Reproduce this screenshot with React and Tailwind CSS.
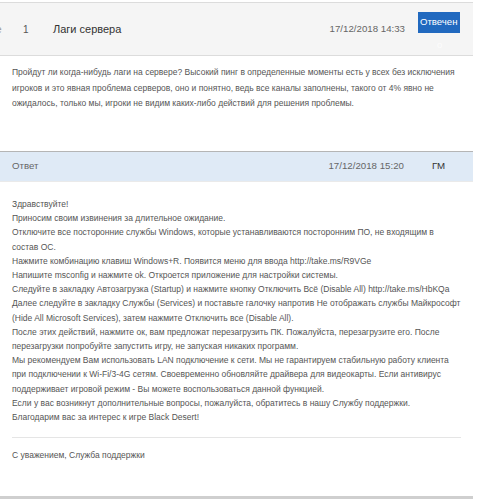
export default function App() {
  const body = [
    "Здравствуйте!",
    "Приносим своим извинения за длительное ожидание.",
    "Отключите все посторонние службы Windows, которые устанавливаются посторонним ПО, не входящим в состав ОС.",
    "Нажмите комбинацию клавиш Windows+R. Появится меню для ввода http://take.ms/R9VGe",
    "Напишите msconfig и нажмите ok. Откроется приложение для настройки системы.",
    "Следуйте в закладку Автозагрузка (Startup) и нажмите кнопку Отключить Всё (Disable All) http://take.ms/HbKQa",
    "Далее следуйте в закладку Службы (Services) и поставьте галочку напротив Не отображать службы Майкрософт (Hide All Microsoft Services), затем нажмите Отключить все (Disable All).",
    "После этих действий, нажмите ок, вам предложат перезагрузить ПК. Пожалуйста, перезагрузите его. После перезагрузки попробуйте запустить игру, не запуская никаких программ.",
    "Мы рекомендуем Вам использовать LAN подключение к сети. Мы не гарантируем стабильную работу клиента при подключении к Wi-Fi/3-4G сетям. Своевременно обновляйте драйвера для видеокарты. Если антивирус поддерживает игровой режим - Вы можете воспользоваться данной функцией.",
    "Если у вас возникнут дополнительные вопросы, пожалуйста, обратитесь в нашу Службу поддержки.",
    "Благодарим вас за интерес к игре Black Desert!",
  ];
  return (
    <div
      className="w-[480px] h-[502px] bg-white overflow-hidden"
      style={{ fontFamily: "Arial, 'Liberation Sans', sans-serif" }}
    >
      <div className="w-[473px]">
        {/* top row */}
        <div className="mt-[2px] h-[54px] bg-[#f5f5f5] border-y border-[#dcdcdc] flex items-center relative">
          <span className="ml-[-4px] text-[10px] text-[#999] w-[27px]">е</span>
          <span className="text-[10px] text-[#555] w-[30px]">1</span>
          <span className="text-[11px] text-[#333]">Лаги сервера</span>
          <span className="ml-auto mr-[13px] text-[9.7px] text-[#666]">17/12/2018 14:33</span>
          <div className="mr-[13px] w-[42px] h-[21px] bg-[#2169bf] self-start mt-[9px] relative">
            <span className="absolute left-[2px] top-[3px] text-[9.6px] leading-[13px] text-white whitespace-nowrap">Отвечен</span>
            <span className="absolute left-[19px] top-[26px] text-[9.6px] leading-[13px] text-white opacity-80">о</span>
          </div>
        </div>
        {/* question text */}
        <div className="h-[95px] pl-[12px] pr-[8px] pt-[9px] text-[8.5px] leading-[15.5px] text-[#555]">
          <p>
            Пройдут ли когда-нибудь лаги на сервере? Высокий пинг в определенные моменты есть у всех без исключения игроков и это явная проблема серверов, оно и понятно, ведь все каналы заполнены, такого от 4% явно не ожидалось, только мы, игроки не видим каких-либо действий для решения проблемы.
          </p>
        </div>
        {/* answer header */}
        <div className="h-[31px] bg-[#dfeaf6] border-t border-[#b5b5b5] border-b border-b-[#eaeaea] flex items-center px-[12px] text-[9.7px] text-[#666]">
          <span>Ответ</span>
          <span className="ml-auto">17/12/2018 15:20</span>
          <span className="ml-[28px] mr-[16px] text-[#333]">ГМ</span>
        </div>
        {/* answer body */}
        <div className="pl-[12px] pr-[12px] pt-[15px] text-[8.5px] leading-[14.2px] text-[#555]">
          {body.map((l, i) => (
            <p key={i}>{l}</p>
          ))}
        </div>
        <div className="mx-[12px] mt-[13px] border-t border-[#e5e5e5]" />
        <div className="px-[12px] pt-[10px] h-[58px] text-[8.5px] leading-[14px] text-[#555]">
          С уважением, Служба поддержки
        </div>
        <div className="h-[3px] bg-[#cfcfcf]" />
      </div>
    </div>
  );
}
